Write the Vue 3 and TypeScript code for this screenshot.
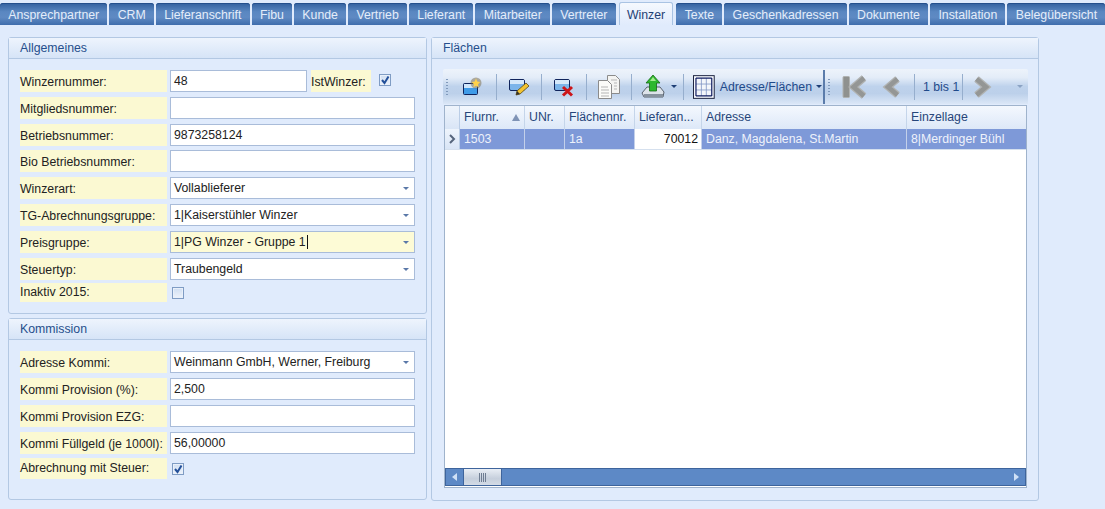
<template>
  <div class="page">
    <nav class="tabs">
      <span v-for="tab in tabs" :key="tab" class="tab" :class="{ active: tab === 'Winzer' }">{{ tab }}</span>
    </nav>

    <div class="content">
      <div class="left">
        <section class="panel general">
          <h3>Allgemeines</h3>
          <div class="form">
            <div v-for="row in generalRows" :key="row.label" class="row" :class="row.cls">
              <label>{{ row.label }}</label>
              <template v-if="row.label === 'Winzernummer:'">
                <div class="input short">{{ row.value }}</div>
                <label class="inline-label">IstWinzer:</label>
                <span class="check on"><svg viewBox="0 0 10 10"><path d="M2 5 4.500 8 8.500 1.500" /></svg></span>
              </template>
              <span v-else-if="row.type === 'check'" class="check"></span>
              <div v-else class="input" :class="{ focused: row.focused }">
                {{ row.value }}<i v-if="row.focused" class="cursor"></i>
                <span v-if="row.type === 'select'" class="caret"></span>
              </div>
            </div>
          </div>
        </section>

        <section class="panel commission">
          <h3>Kommission</h3>
          <div class="form">
            <div v-for="row in commissionRows" :key="row.label" class="row" :class="row.cls">
              <label>{{ row.label }}</label>
              <span v-if="row.type === 'check'" class="check on"><svg viewBox="0 0 10 10"><path d="M2 5 4.500 8 8.500 1.500" /></svg></span>
              <div v-else class="input">
                {{ row.value }}
                <span v-if="row.type === 'select'" class="caret"></span>
              </div>
            </div>
          </div>
        </section>
      </div>

      <section class="panel areas">
        <h3>Flächen</h3>
        <div class="areas-body">
          <div class="toolbar">
            <span class="grip"></span>
            <button class="tool first">
              <svg width="20" height="20" viewBox="0 0 20 20">
                <rect x="1.500" y="6.500" width="14" height="11" rx="1" fill="#3f9be8" stroke="#10245c" />
                <rect x="2" y="7" width="13" height="4" fill="#cfe6fb" />
                <circle cx="14" cy="6" r="5.500" fill="#7a6a48" opacity=".5" />
                <path d="M14 1.500l1.300 3 3 .6-2.200 2.100.5 3-2.600-1.500-2.600 1.500.5-3-2.200-2.100 3-.6z" fill="#ffd24a" />
              </svg>
            </button>
            <button class="tool">
              <svg width="22" height="22" viewBox="0 0 22 22">
                <rect x="1.500" y="3.500" width="15" height="11" rx="1.500" fill="#7cb5ea" stroke="#10245c" />
                <rect x="2" y="4" width="14" height="4" fill="#d5e8fa" />
                <path d="M8 19l1-4 9-8 3 3-9 8z" fill="#f2c230" stroke="#5a4a14" stroke-width=".8" />
                <path d="M8 19l1-4 3 3z" fill="#33302a" />
              </svg>
            </button>
            <button class="tool">
              <svg width="22" height="22" viewBox="0 0 22 22">
                <rect x="1.500" y="3.500" width="15" height="11" rx="1.500" fill="#7cb5ea" stroke="#10245c" />
                <rect x="2" y="4" width="14" height="4" fill="#d5e8fa" />
                <path d="M10 11l9 8.500M19 11l-9 8.500" stroke="#cc1418" stroke-width="3" />
              </svg>
            </button>
            <button class="tool">
              <svg width="24" height="26" viewBox="0 0 24 26">
                <path d="M10.500 1.500h8l4 4v14h-12z" fill="#f4f4f2" stroke="#8b8b8b" />
                <path d="M1.500 6.500h9l4 4v14h-13z" fill="#fbfbf9" stroke="#8b8b8b" />
                <path d="M4 13h7M4 16h8M4 19h8M4 22h8M14 6h6M17 9h3M17 12h3M17 15h3" stroke="#b5b5b5" />
              </svg>
            </button>
            <button class="tool upload">
              <svg width="24" height="26" viewBox="0 0 24 26">
                <path d="M1 19l5-6h13l4 5-1 5H3z" fill="#dde3ea" stroke="#59626e" />
                <path d="M3 20h19v3H3z" fill="#87929f" />
                <path d="M12 1l7 8h-3.500v8h-7V9H5z" fill="#2eb82e" stroke="#146a14" stroke-width=".8" />
                <path d="M12 3l3 4h-6z" fill="#a5ec90" />
              </svg>
              <span class="tool-caret"></span>
            </button>
            <button class="tool layout">
              <svg width="22" height="24" viewBox="0 0 22 24">
                <rect x=".5" y=".5" width="21" height="23" fill="#f3f6fb" stroke="#1c2340" />
                <path d="M3 9h16M3 15h16M8.500 3v18M13.500 3v18" fill="none" stroke="#7d93c4" stroke-width=".8" />
                <path d="M3 3h16M3 21h16M3 3v18M19 3v18" stroke="#101c60" stroke-width="1.200" />
              </svg>
              <span class="tool-text">Adresse/Flächen</span>
              <span class="tool-caret"></span>
            </button>
            <span class="bar-break"></span>
            <span class="grip second"></span>
            <span class="nav-btn nav-first">
              <svg width="25" height="24" viewBox="0 0 25 24">
                <rect x="1" y="1.500" width="6.500" height="21" rx="1" fill="#8f918f" stroke="#b0b2b1" />
                <path d="M22 3 11.500 12 22 21" fill="none" stroke="#b0b2b1" stroke-width="7" />
                <path d="M22 3 11.500 12 22 21" fill="none" stroke="#949695" stroke-width="4.500" />
              </svg>
            </span>
            <span class="nav-btn nav-prev">
              <svg width="20" height="24" viewBox="0 0 20 24">
                <path d="M15.500 4 6 12l9.500 8" fill="none" stroke="#b0b2b1" stroke-width="7" />
                <path d="M15.500 4 6 12l9.500 8" fill="none" stroke="#949695" stroke-width="4.500" />
              </svg>
            </span>
            <span class="page-info">1 bis 1</span>
            <span class="nav-btn nav-next">
              <svg width="20" height="24" viewBox="0 0 20 24">
                <path d="M4.500 4 14 12l-9.500 8" fill="none" stroke="#b0b2b1" stroke-width="7" />
                <path d="M4.500 4 14 12l-9.500 8" fill="none" stroke="#949695" stroke-width="4.500" />
              </svg>
            </span>
            <span class="tool-caret overflow"></span>
          </div>

          <div class="grid-box">
            <div class="grid-head">
              <span class="indicator"></span>
              <span v-for="col in columns" :key="col.name" class="head-cell" :style="{ width: col.width + 'px' }">
                {{ col.name }}<i v-if="col.sorted" class="sort"></i>
              </span>
            </div>
            <div class="grid-row">
              <span class="indicator row-mark"><svg width="7" height="10" viewBox="0 0 7 10"><path d="M1 1l4 4-4 4" fill="none" stroke="#56657c" stroke-width="2" /></svg></span>
              <span
                v-for="col in columns"
                :key="col.name"
                class="cell"
                :class="{ editing: col.name === 'Lieferan...' }"
                :style="{ width: col.width + 'px' }"
              >{{ col.value }}</span>
            </div>
            <div class="grid-empty"></div>
            <div class="scrollbar">
              <span class="arrow"><i class="tri left-tri"></i></span>
              <span class="thumb"><i></i></span>
              <span class="track"></span>
              <span class="arrow end"><i class="tri right-tri"></i></span>
            </div>
          </div>
        </div>
      </section>
    </div>
  </div>
</template>

<script setup lang="ts">
interface FormRow {
  label: string
  value?: string
  type?: 'select' | 'check'
  focused?: boolean
  cls?: string
}

const tabs = [
  'Ansprechpartner', 'CRM', 'Lieferanschrift', 'Fibu', 'Kunde', 'Vertrieb', 'Lieferant', 'Mitarbeiter',
  'Vertreter', 'Winzer', 'Texte', 'Geschenkadressen', 'Dokumente', 'Installation', 'Belegübersicht'
]

const generalRows: FormRow[] = [
  { label: 'Winzernummer:', value: '48' },
  { label: 'Mitgliedsnummer:', value: '' },
  { label: 'Betriebsnummer:', value: '9873258124' },
  { label: 'Bio Betriebsnummer:', value: '', cls: 'tight' },
  { label: 'Winzerart:', value: 'Vollablieferer', type: 'select' },
  { label: 'TG-Abrechnungsgruppe:', value: '1|Kaiserstühler Winzer', type: 'select' },
  { label: 'Preisgruppe:', value: '1|PG Winzer - Gruppe 1', type: 'select', focused: true },
  { label: 'Steuertyp:', value: 'Traubengeld', type: 'select' },
  { label: 'Inaktiv 2015:', type: 'check', cls: 'check-row' }
]

const commissionRows: FormRow[] = [
  { label: 'Adresse Kommi:', value: 'Weinmann GmbH, Werner, Freiburg', type: 'select' },
  { label: 'Kommi Provision (%):', value: '2,500' },
  { label: 'Kommi Provision EZG:', value: '' },
  { label: 'Kommi Füllgeld (je 1000l):', value: '56,00000' },
  { label: 'Abrechnung mit Steuer:', type: 'check', cls: 'check-row last' }
]

const columns = [
  { name: 'Flurnr.', width: 65, value: '1503', sorted: true },
  { name: 'UNr.', width: 40, value: '' },
  { name: 'Flächennr.', width: 70, value: '1a' },
  { name: 'Lieferan...', width: 67, value: '70012' },
  { name: 'Adresse', width: 205, value: 'Danz, Magdalena, St.Martin' },
  { name: 'Einzellage', width: 119, value: '8|Merdinger Bühl' }
]
</script>

<style>
html, body {
  margin: 0;
  background: #e0ebfc;
}
</style>

<style scoped>
.page {
  width: 1105px;
  height: 509px;
  overflow: hidden;
  background: #e0ebfc;
  font-family: "Liberation Sans", Arial, sans-serif;
  font-size: 12.3px;
  color: #222;
}

.tabs {
  display: flex;
  gap: 2px;
  height: 25px;
  padding-top: 3px;
  box-sizing: border-box;
  white-space: nowrap;
}

.tab {
  flex: none;
  padding: 5px 8.25px 0;
  border-radius: 3px 3px 0 0;
  background: linear-gradient(#32609e, #5a87c1 40%, #5f8ac3 65%, #3f6dac);
  color: #e4edfa;
  box-shadow: inset 0 1px 0 #244f8c;
}

.tab.active {
  margin: -1px 1px 0;
  padding-top: 6px;
  background: linear-gradient(#f6f9fe, #e0ebfc);
  color: #1f3f75;
  box-shadow: inset 0 1px 0 #a9c3e3, inset 1px 0 0 #a9c3e3, inset -1px 0 0 #a9c3e3;
}

.content {
  display: flex;
  gap: 4px;
  padding: 12px 0 0 8px;
}

.left {
  display: flex;
  flex-direction: column;
  gap: 4px;
  width: 419px;
}

.panel {
  box-sizing: border-box;
  border: 1px solid #b3c8e3;
  border-radius: 3px;
}

.panel h3 {
  margin: 0;
  height: 21px;
  box-sizing: border-box;
  padding: 3px 11px 0;
  background: linear-gradient(#eef4fd, #d6e4f7);
  border-bottom: 1px solid #b3c8e3;
  font-size: 12.3px;
  font-weight: normal;
  color: #264f8c;
}

.general {
  height: 277px;
}

.commission {
  height: 182px;
}

.areas {
  width: 608px;
  height: 464px;
}

.form {
  display: flex;
  flex-direction: column;
  gap: 5px;
  padding: 11px 11px 0;
}

.row {
  display: flex;
  height: 22px;
  gap: 3px;
}

.row.tight {
  margin-top: -1px;
}

.row.check-row {
  margin-top: -2px;
  height: 19px;
  align-items: center;
}

.row.check-row.last {
  margin-top: -1px;
  height: 21px;
}

.row label {
  flex: none;
  width: 147px;
  align-self: stretch;
  padding-top: 1px;
  box-sizing: border-box;
  background: #fbf9d2;
  line-height: 22px;
  white-space: nowrap;
}

.row.check-row label {
  padding-top: 0;
  line-height: 19px;
}

.row.check-row.last label {
  line-height: 20px;
}

.row .inline-label {
  width: 60px;
  margin-left: 1px;
}

.input {
  position: relative;
  flex: none;
  width: 245px;
  height: 22px;
  box-sizing: border-box;
  padding: 0 3px;
  border: 1px solid #a9bcd9;
  background: #fff;
  line-height: 21px;
}

.input.short {
  width: 137px;
}

.input.focused {
  background: #fdfbd6;
}

.cursor {
  display: inline-block;
  width: 1px;
  height: 14px;
  margin-left: 1px;
  vertical-align: -3px;
  background: #111;
}

.caret {
  position: absolute;
  right: 5px;
  top: 9px;
  border: 3px solid transparent;
  border-top-color: #5a78a8;
  border-bottom: 0;
}

.check {
  display: inline-block;
  flex: none;
  width: 10px;
  height: 10px;
  margin-left: 2px;
  border: 1px solid #7f9cc4;
  background: linear-gradient(#cfdef2, #eef3fb);
  box-shadow: inset 0 0 0 1px #e9f0fa;
}

.check svg {
  display: block;
  width: 10px;
  height: 10px;
}

.check path {
  fill: none;
  stroke: #23509a;
  stroke-width: 2;
}

.row:first-child .check {
  align-self: center;
  margin-left: 5px;
  margin-top: -2px;
}

.areas-body {
  padding: 10px 11px 0;
}

.toolbar {
  display: flex;
  align-items: center;
  height: 35px;
  width: 585px;
  box-sizing: border-box;
  border-radius: 2px 2px 0 0;
  background: linear-gradient(#edf3fb, #e3ecf8 25%, #bed2ec 50%, #bcd0ea 70%, #dbe7f7);
}

.grip {
  flex: none;
  width: 2px;
  height: 18px;
  margin: 0 0 0 3px;
  background-image: radial-gradient(circle, #8099bb 1px, transparent 1px);
  background-size: 2px 3px;
}

.tool {
  display: flex;
  align-items: center;
  justify-content: center;
  flex: none;
  width: 45px;
  height: 26px;
  padding: 0;
  border: 0;
  border-right: 1px solid #96aecd;
  background: none;
  font: inherit;
}

.tool.first { width: 49px; }
.tool.upload { width: 52px; gap: 6px; justify-content: flex-start; padding-left: 9px; }
.tool.layout { width: 138px; border-right: 0; justify-content: flex-start; padding-left: 9px; }

.tool-text {
  margin: 0 4px 0 5px;
  color: #1f4a8a;
  white-space: nowrap;
}

.tool-caret {
  flex: none;
  border: 3px solid transparent;
  border-top-color: #1f3f75;
  border-bottom: 0;
}

.bar-break {
  flex: none;
  width: 2px;
  height: 34px;
  margin-left: 1px;
  background: #5b7cab;
}

.grip.second {
  margin-left: 3px;
}

.nav-btn {
  display: flex;
  flex: none;
}

.nav-first { margin-left: 12px; }
.nav-prev { margin-left: 15px; }

.page-info {
  flex: none;
  width: 49px;
  height: 26px;
  margin-left: 12px;
  border: solid #96aecd;
  border-width: 0 1px;
  box-sizing: border-box;
  padding-left: 8px;
  line-height: 26px;
  color: #1f4a8a;
  white-space: nowrap;
}

.nav-next { margin-left: 9px; }

.overflow {
  margin-left: 25px;
  border-top-color: #8ba3c4;
}

.grid-box {
  display: flex;
  flex-direction: column;
  width: 583px;
  height: 383px;
  margin: 1px 0 0 1px;
  box-sizing: border-box;
  border: 1px solid #9fb3cc;
  background: #fff;
}

.grid-head, .grid-row {
  display: flex;
  flex: none;
}

.grid-head {
  height: 23px;
  background: linear-gradient(#f4f8fe, #dde8f8);
}

.indicator {
  flex: none;
  width: 15px;
  box-sizing: border-box;
  border-right: 1px solid #bacde6;
  background: linear-gradient(#eef4fc, #d9e5f6);
}

.row-mark {
  display: flex;
  align-items: center;
  justify-content: center;
}

.head-cell {
  position: relative;
  flex: none;
  box-sizing: border-box;
  padding: 4px 0 0 4px;
  border-right: 1px solid #c5d5ea;
  color: #27467a;
  white-space: nowrap;
  overflow: hidden;
}

.head-cell:last-child, .cell:last-child {
  border-right: 0;
}

.sort {
  position: absolute;
  right: 4px;
  top: 8px;
  border: 4px solid transparent;
  border-bottom: 7px solid #7f93b5;
  border-top: 0;
}

.grid-row {
  height: 21px;
  border-bottom: 1px solid #d5e0ee;
  box-sizing: border-box;
}

.cell {
  flex: none;
  box-sizing: border-box;
  padding: 0 0 0 4px;
  border-right: 1px solid #c3d0ea;
  background: #7e99d8;
  color: #eef2fb;
  line-height: 21px;
  white-space: nowrap;
  overflow: hidden;
}

.cell.editing {
  padding: 0 3px 0 0;
  background: #fff;
  color: #111;
  text-align: right;
}

.grid-empty {
  flex: 1;
}

.scrollbar {
  display: flex;
  flex: none;
  height: 16px;
  margin: 0 0 1px;
  border: 1px solid #3e649c;
  background: #5d89c6;
}

.arrow {
  display: flex;
  align-items: center;
  justify-content: center;
  flex: none;
  width: 17px;
}

.tri {
  border: 4px solid transparent;
  border-left: 0;
  border-right: 5px solid #cfe0f6;
}

.right-tri {
  border-left: 5px solid #cfe0f6;
  border-right: 0;
}

.thumb {
  display: flex;
  align-items: center;
  justify-content: center;
  flex: none;
  width: 39px;
  border: solid #3e649c;
  border-width: 0 1px;
  box-sizing: border-box;
  background: linear-gradient(#e9eef5, #c6cfdc 60%, #d3dbe6);
}

.thumb i {
  width: 7px;
  height: 9px;
  background: repeating-linear-gradient(90deg, #6f7d92 0 1px, transparent 1px 2px);
}

.track {
  flex: 1;
}
</style>
